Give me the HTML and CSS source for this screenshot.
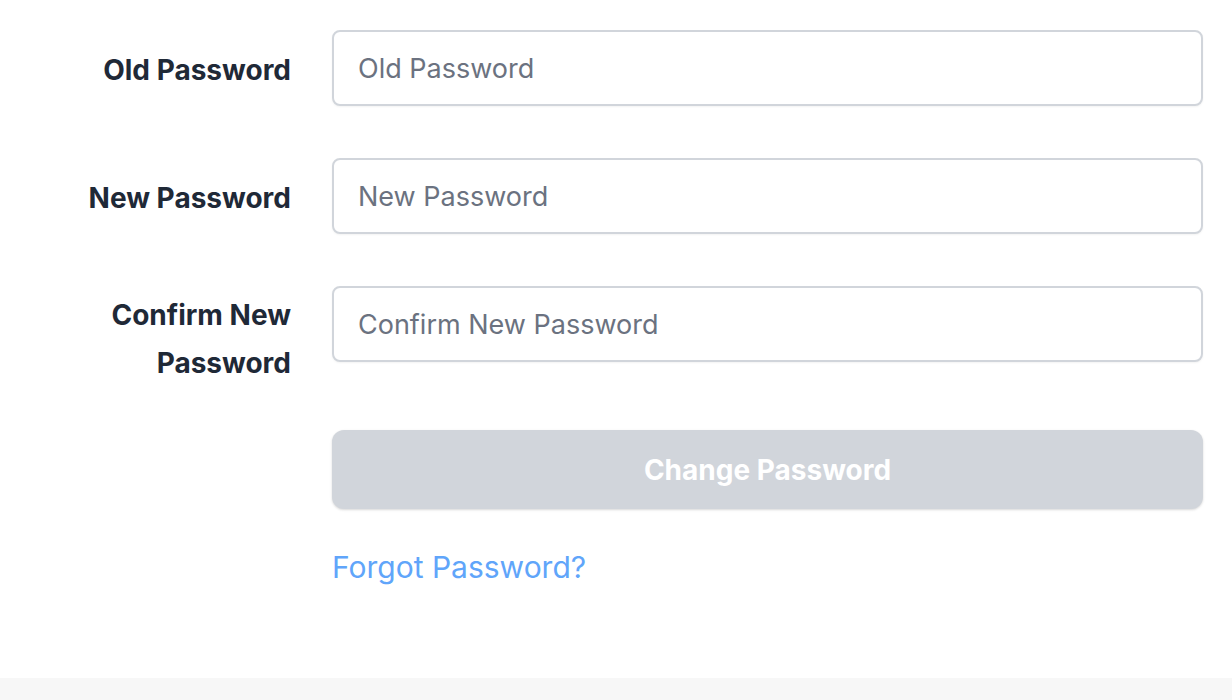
FILE: index.html
```html
<!DOCTYPE html>
<html lang="en">
<head>
<meta charset="utf-8">
<title>Change Password</title>
<link rel="stylesheet" href="styles.css">
</head>
<body>
<main class="page">
  <form class="form">
    <div class="row">
      <label class="label" for="old">Old Password</label>
      <input class="input" id="old" type="password" placeholder="Old Password">
    </div>
    <div class="row">
      <label class="label" for="new">New Password</label>
      <input class="input" id="new" type="password" placeholder="New Password">
    </div>
    <div class="row row--last">
      <label class="label label--wrap" for="confirm">Confirm New Password</label>
      <input class="input" id="confirm" type="password" placeholder="Confirm New Password">
    </div>
    <div class="actions">
      <button class="button" type="button" disabled>Change Password</button>
      <a class="link" href="#">Forgot Password?</a>
    </div>
  </form>
</main>
<footer class="footer"></footer>
</body>
</html>
```

FILE: styles.css
```css
* { box-sizing: border-box; }

html, body {
  margin: 0;
  padding: 0;
  background: #ffffff;
  font-family: Inter, "Noto Sans", "Liberation Sans", sans-serif;
}

.page {
  padding: 30px 29px 91px 0;
}

.form {
  display: flex;
  flex-direction: column;
}

.row {
  display: flex;
  align-items: flex-start;
  gap: 41px;
  height: 76px;
  margin-bottom: 52px;
}

.row--last {
  margin-bottom: 68px;
}

.label {
  flex: 0 0 291px;
  width: 291px;
  padding-top: 16px;
  text-align: right;
  font-size: 28px;
  font-weight: 700;
  line-height: 48px;
  color: #1f2937;
}

.label--wrap {
  padding-top: 5px;
  padding-left: 100px;
}

.input {
  flex: 1;
  height: 76px;
  border: 2px solid #d1d5db;
  border-radius: 8px;
  padding: 0 24px;
  font-family: inherit;
  font-size: 27px;
  color: #111827;
  background: #fff;
  box-shadow: 0 1px 2px rgba(0, 0, 0, 0.05);
  outline: none;
}

.input::placeholder {
  color: #6b7280;
  opacity: 1;
}

.actions {
  margin-left: 332px;
  display: flex;
  flex-direction: column;
  align-items: flex-start;
}

.button {
  width: 100%;
  height: 79px;
  border: none;
  border-radius: 12px;
  background: #d1d5db;
  color: #ffffff;
  font-family: inherit;
  font-size: 28px;
  font-weight: 700;
  box-shadow: 0 1px 3px rgba(0, 0, 0, 0.1), 0 1px 2px rgba(0, 0, 0, 0.06);
  cursor: not-allowed;
}

.link {
  margin-top: 38px;
  font-size: 30px;
  line-height: 40px;
  color: #60a5fa;
  text-decoration: none;
}

.footer {
  height: 40px;
  background: #f7f7f7;
}
```
